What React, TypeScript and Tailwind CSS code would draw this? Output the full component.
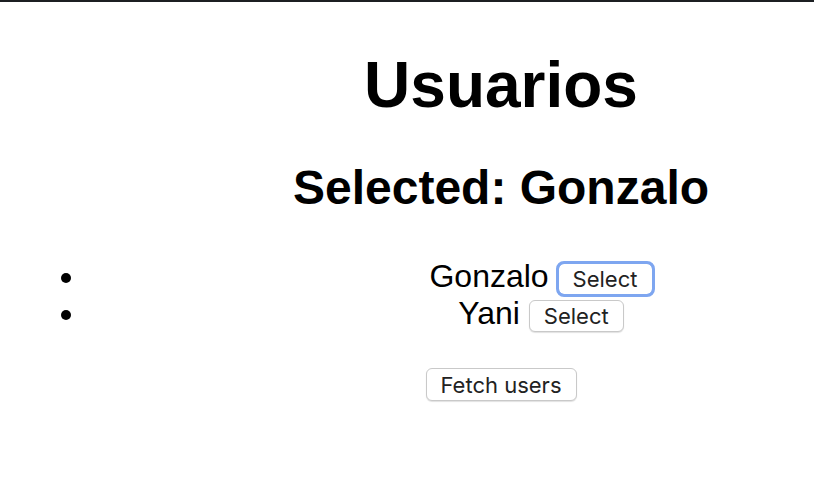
const users = ["Gonzalo", "Yani"];

function SelectButton({ focused }: { focused?: boolean }) {
  return (
    <button
      className={
        "inline-block align-middle h-[32px] w-[95px] rounded-[6px] bg-white text-[22px] leading-none text-[#222] border shadow-[0_1px_1px_rgba(0,0,0,0.12)] " +
        (focused
          ? "border-[#7ea6f0] outline-[3px] outline-[#7ea6f0] outline-offset-[-1px]"
          : "border-[#c9c9c9]")
      }
      style={{ fontFamily: "Inter, 'Liberation Sans', sans-serif" }}
    >
      Select
    </button>
  );
}

export default function App() {
  return (
    <div className="w-full overflow-hidden bg-white min-h-[500px]">
      <div className="h-[2px] bg-[#1c1f22]" />
      <div
        className="w-[1002px] text-center text-black"
        style={{ fontFamily: "'Liberation Sans', Arial, sans-serif" }}
      >
        <h1 className="mt-[46px] text-[64px] leading-[74px] font-bold">Usuarios</h1>
        <h2 className="mt-[38px] text-[48px] leading-[55px] font-bold">Selected: Gonzalo</h2>
        <ul className="mt-[43px] pl-[87px] mr-[7px] list-disc text-[32px] leading-[37px]">
          {users.map((name, i) => (
            <li key={name}>
              {name} <SelectButton focused={i === 0} />
            </li>
          ))}
        </ul>
        <div className="mt-[36px]">
          <button
            className="h-[33px] w-[151px] rounded-[6px] bg-white text-[22px] leading-none text-[#222] border border-[#c9c9c9] shadow-[0_1px_1px_rgba(0,0,0,0.12)]"
            style={{ fontFamily: "Inter, 'Liberation Sans', sans-serif" }}
          >
            Fetch users
          </button>
        </div>
      </div>
    </div>
  );
}
